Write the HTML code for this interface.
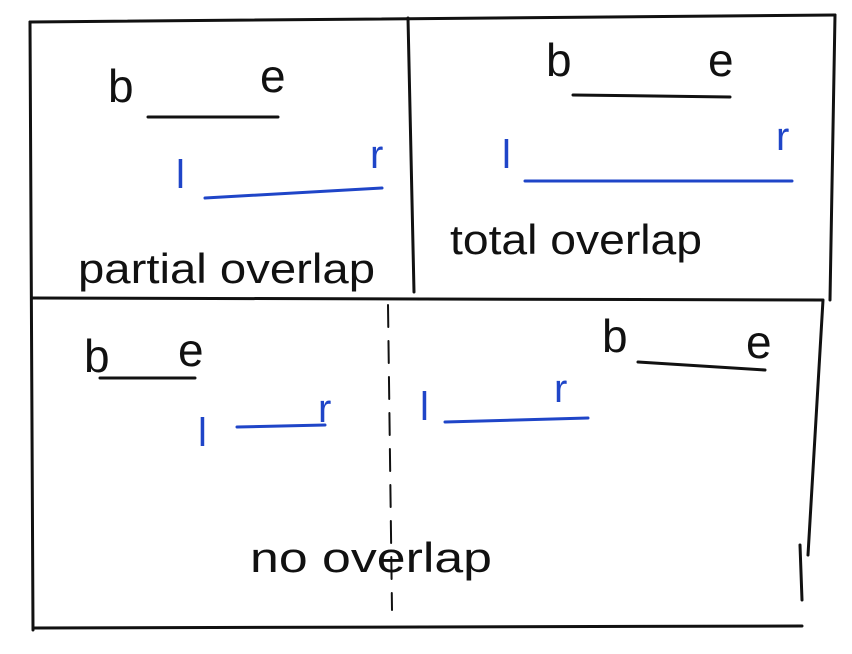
<!DOCTYPE html>
<html><head><meta charset="utf-8"><style>
html,body{margin:0;padding:0;background:#fff;width:852px;height:654px;overflow:hidden}
svg{display:block}
text{font-family:"Liberation Sans","DejaVu Sans",sans-serif}
.k{fill:#111}
.b{fill:#1f45c8}
</style></head><body>
<svg width="852" height="654" viewBox="0 0 852 654" xmlns="http://www.w3.org/2000/svg">
<g stroke="#111" stroke-width="3" fill="none" stroke-linecap="round">
<path d="M30 22 L835 15"/>
<path d="M30 22 L33 630"/>
<path d="M33 628 L802 626"/>
<path d="M835 15 L830 300"/>
<path d="M823 300 L808 555"/>
<path d="M800 545 L802 600"/>
<path d="M32 298 L822 300"/>
<path d="M408 18 L414 292"/>
<path d="M388 305 L392 610" stroke-dasharray="22 14" stroke-width="2"/>
<path d="M148 117 L278 117"/>
<path d="M573 95 L730 97"/>
<path d="M100 378 L195 378"/>
<path d="M638 362 L765 370"/>
</g>
<g stroke="#1f45c8" stroke-width="3" fill="none" stroke-linecap="round">
<path d="M205 198 L382 188"/>
<path d="M525 181 L792 181"/>
<path d="M237 427 L325 425"/>
<path d="M445 422 L588 418"/>
</g>
<g class="k" font-size="46">
<text x="108" y="102">b</text><text x="260" y="92">e</text>
<text x="546" y="76">b</text><text x="708" y="76">e</text>
<text x="84" y="372">b</text><text x="178" y="366">e</text>
<text x="602" y="352">b</text><text x="746" y="358">e</text>
</g>
<g class="b" font-size="40">
<text x="176" y="188">l</text><text x="370" y="168">r</text>
<text x="502" y="168">l</text><text x="776" y="150">r</text>
<text x="198" y="446">l</text><text x="318" y="422">r</text>
<text x="420" y="420">l</text><text x="554" y="402">r</text>
</g>
<g class="k" font-size="42">
<text x="78" y="283" textLength="297" lengthAdjust="spacingAndGlyphs">partial overlap</text>
<text x="450" y="254" textLength="252" lengthAdjust="spacingAndGlyphs">total overlap</text>
<text x="250" y="572" textLength="242" lengthAdjust="spacingAndGlyphs">no overlap</text>
</g>
</svg>
</body></html>
